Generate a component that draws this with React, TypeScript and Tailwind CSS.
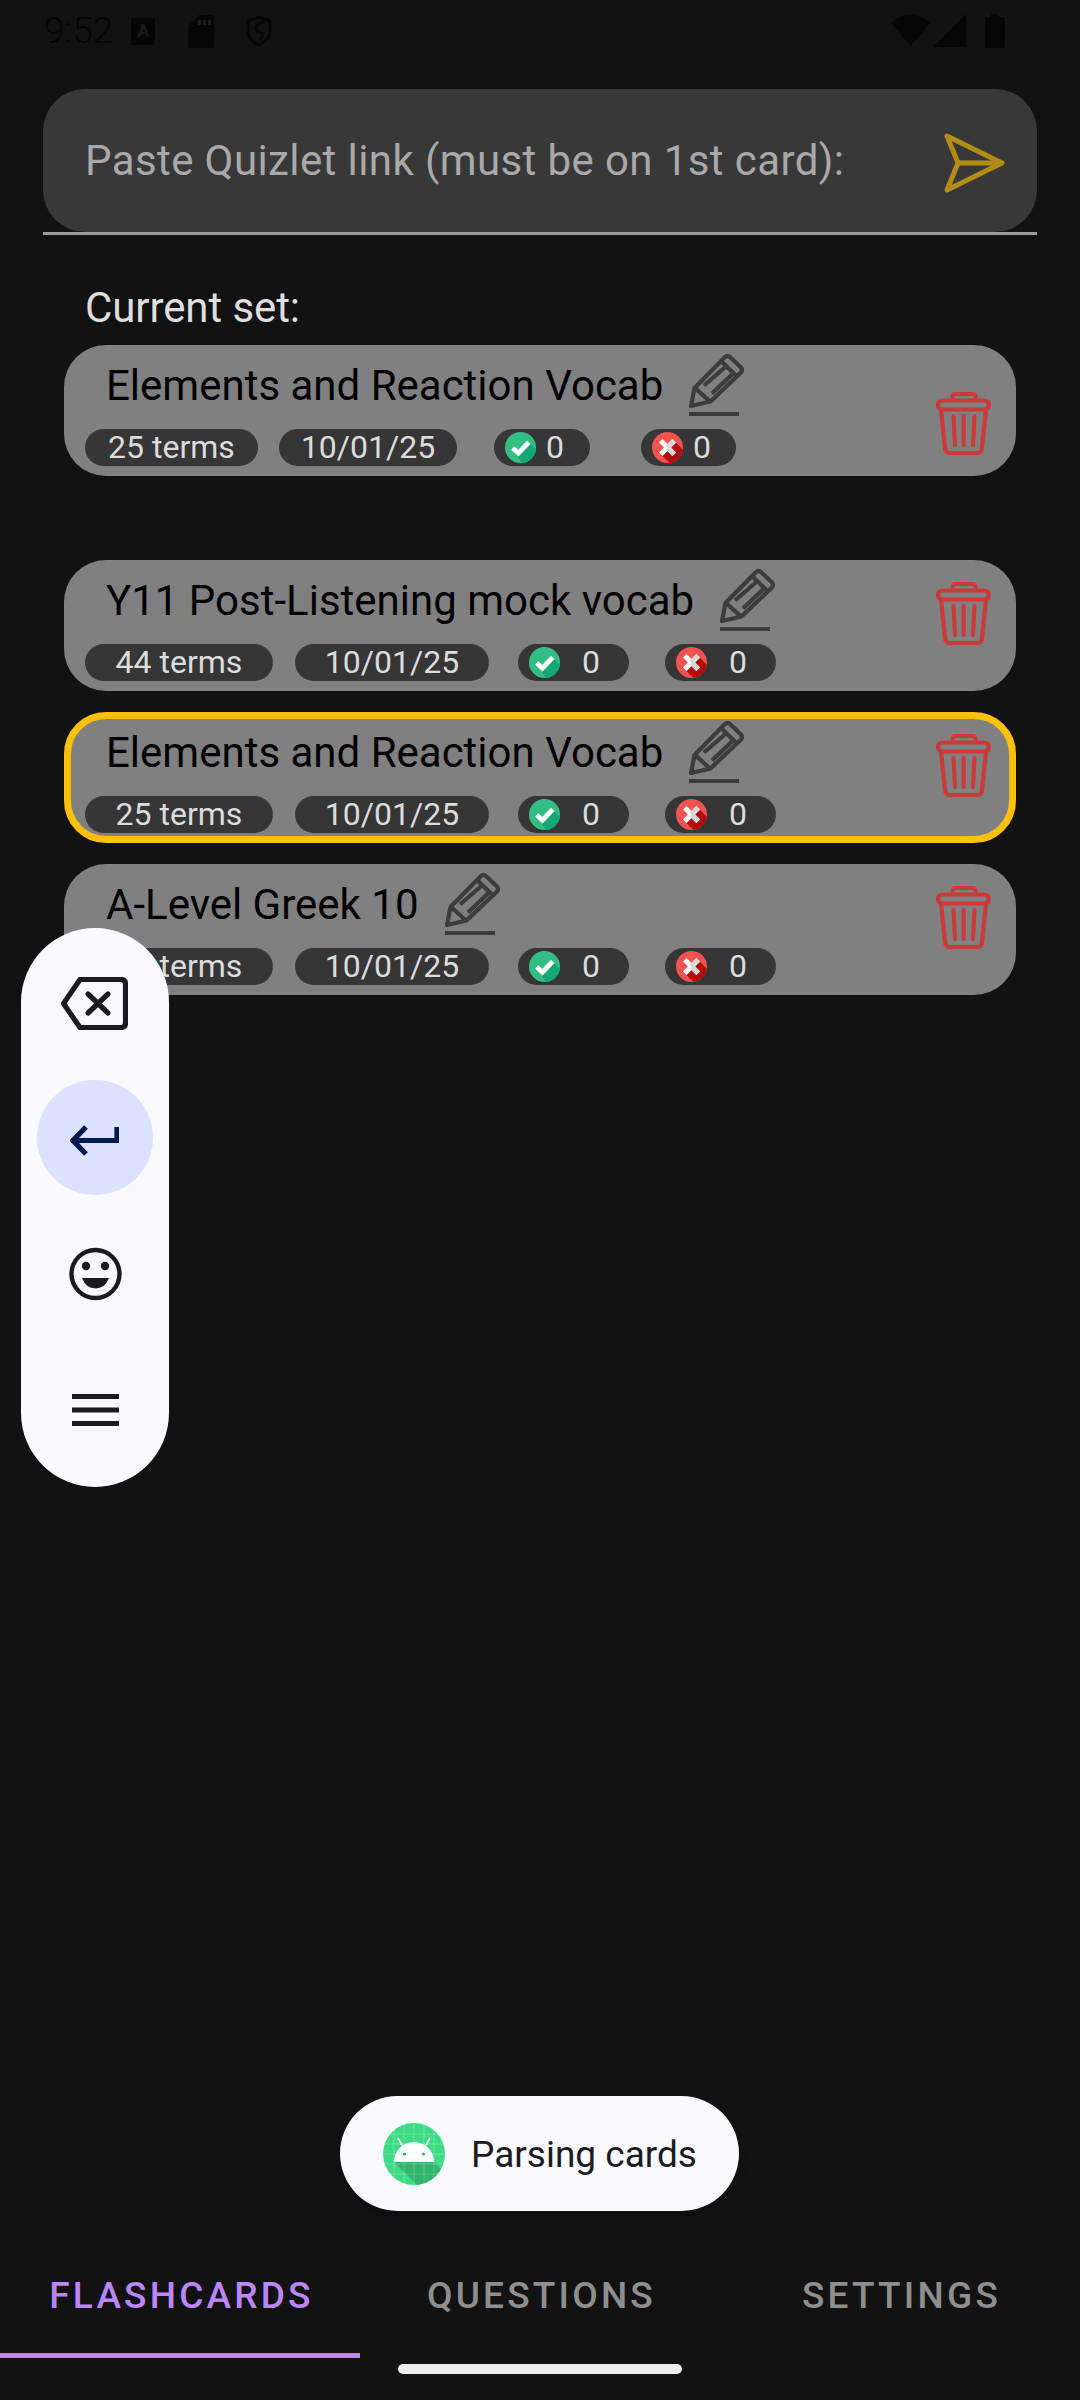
const shots = {
  check: "M7 15.5 L13 21.5 L23 9.5 L30 17 A15 15 0 0 1 16 30 Z",
  cross: "M8 21 L21 8 L30 17.5 A15 15 0 0 1 17 30 Z",
};

function CheckBadge() {
  return (
    <svg width="31" height="31" viewBox="0 0 30 30" className="shrink-0">
      <circle cx="15" cy="15" r="15" fill="#35BE84" />
      <path d={shots.check} fill="#10A873" />
      <path d="M7.5 15.5 L13 20.5 L23 10" fill="none" stroke="#fff" strokeWidth="4.6" />
    </svg>
  );
}

function CrossBadge() {
  return (
    <svg width="31" height="31" viewBox="0 0 30 30" className="shrink-0">
      <circle cx="15" cy="15" r="15" fill="#F5534F" />
      <path d={shots.cross} fill="#B00D0F" />
      <path d="M8.5 8.5 L21.5 21.5 M21.5 8.5 L8.5 21.5" fill="none" stroke="#fff" strokeWidth="5" />
      <path d="M15 15 L21.5 21.5 M15 15 L21.5 8.5" fill="none" stroke="#d8d8d8" strokeWidth="5" />
    </svg>
  );
}

function Pencil() {
  return (
    <svg width="55" height="63" viewBox="0 0 55 63" fill="none" stroke="#3c3c3c" strokeWidth="4.2" strokeLinejoin="round" className="shrink-0">
      <path d="M2 53 L5.5 35 L36 4 Q38.5 1.8 41 4 L52 14.5 Q54 17 52 19.5 L21.5 48.5 Z" />
      <path d="M32 8 L48 23.5 M6 35 L21 48.5 M15 32.5 L37.5 13 M23 40.5 L44.5 20" />
      <rect x="0" y="59" width="50" height="4" fill="#3c3c3c" stroke="none" />
    </svg>
  );
}

function Trash() {
  return (
    <svg width="55" height="63" viewBox="0 0 55 63" fill="none" stroke="#CB3A3A" strokeWidth="4.2" strokeLinecap="round" strokeLinejoin="round">
      <path d="M16.5 8 V5 Q16.5 2 19.5 2 H36.5 Q39.5 2 39.5 5 V8" />
      <rect x="2" y="8.5" width="51" height="9" rx="4.5" />
      <path d="M5 17.5 L9 56 Q9.5 61 14 61 H41 Q45.5 61 46 56 L50 17.5" />
      <path d="M17.5 24 L19 53 M27.7 24 V53 M38.5 24 L37 53" />
    </svg>
  );
}

function Send() {
  return (
    <svg width="61" height="60" viewBox="0 0 61 60" fill="none" stroke="#B38B17" strokeWidth="5" strokeLinejoin="round">
      <path d="M3 3 L58 30 L3 57 L14 30 Z" />
      <path d="M14 30 H58" />
    </svg>
  );
}

function AndroidIcon() {
  return (
    <svg width="62" height="62" viewBox="0 0 62 62" className="shrink-0">
      <defs>
        <clipPath id="android-disc">
          <circle cx="31" cy="31" r="31" />
        </clipPath>
      </defs>
      <g clipPath="url(#android-disc)">
        <rect width="62" height="62" fill="#3DDC84" />
        <path d="M11 39 H51 L62 50 V62 H34 Z" fill="#2FB56C" />
        <path d="M0 11 H62 M0 21 H62 M0 31 H62 M0 41 H62 M0 51 H62 M11 0 V62 M21 0 V62 M31 0 V62 M41 0 V62 M51 0 V62" stroke="#fff" strokeOpacity="0.28" strokeWidth="0.8" />
      </g>
      <path d="M11 39 A20 20 0 0 1 51 39 Z" fill="#fff" />
      <path d="M19 22 L15 15 M43 22 L47 15" stroke="#fff" strokeWidth="1.6" />
      <circle cx="21.5" cy="31" r="1.6" fill="#2FB56C" />
      <circle cx="40.5" cy="31" r="1.6" fill="#2FB56C" />
    </svg>
  );
}

function StatusBar() {
  return (
    <div className="h-[89px] flex items-start justify-between pl-[44px] pr-[75px] pt-[14px] text-[#060606]">
      <div className="flex items-center gap-[18px]">
        <span className="text-[37px] leading-[34px] font-light">9:52</span>
        <div className="w-[24px] h-[27px] bg-[#060606] rounded-[2px] flex items-center justify-center text-[#1a1a1a] text-[18px] font-bold leading-none">A</div>
        <svg width="26" height="33" viewBox="0 0 26 33" className="ml-[15px]">
          <path d="M11 0 H23 Q26 0 26 3 V30 Q26 33 23 33 H3 Q0 33 0 30 V11 Z" fill="#060606" />
          <path d="M10 5 H13 V10 H10 Z M15 5 H18 V10 H15 Z M20 5 H23 V10 H20 Z" fill="#1c1c1c" />
        </svg>
        <svg width="26" height="32" viewBox="0 0 26 32" fill="none" stroke="#060606" strokeWidth="3" className="ml-[14px]">
          <path d="M13 2 L24 6 V15 Q24 25 13 30 Q2 25 2 15 V6 Z" />
          <path d="M18 7 Q9 9 10 14 Q11 18 15 18 Q18 21 13 25" />
        </svg>
      </div>
      <div className="flex items-start">
        <svg width="39" height="32" viewBox="0 0 39 32">
          <path d="M0 9 Q19.5 -7 39 9 L19.5 32 Z" fill="#060606" />
        </svg>
        <svg width="33" height="33" viewBox="0 0 33 33" className="ml-[3px]">
          <path d="M33 0 V33 H0 Z" fill="#060606" />
        </svg>
        <svg width="20" height="34" viewBox="0 0 20 34" className="ml-[19px]">
          <path d="M6 3 V1 Q6 0 7 0 H13 Q14 0 14 1 V3 H18 Q20 3 20 5 V32 Q20 34 18 34 H2 Q0 34 0 32 V5 Q0 3 2 3 Z" fill="#060606" />
        </svg>
      </div>
    </div>
  );
}

function Chip({ width, children, center = true }: { width: number; children: React.ReactNode; center?: boolean }) {
  return (
    <div
      className={`h-[37px] rounded-full bg-[#363636] flex items-center text-[#dcdcdc] text-[32px] leading-none shrink-0 ${center ? "justify-center pb-[2px]" : "pl-[11px]"}`}
      style={{ width }}
    >
      {children}
    </div>
  );
}

type CardProps = {
  title: string;
  terms: string;
  compact?: boolean;
  active?: boolean;
  trashTop?: number;
};

function SetCard({ title, terms, compact = false, active = false, trashTop = 15 }: CardProps) {
  // the "current set" card has tighter chips than the ones in the list
  const widths = compact ? [173, 178, 96, 95] : [188, 194, 111, 111];
  const gaps = compact ? [21, 37, 51] : [22, 29, 36];
  const zeroGap = compact ? 10 : 22;

  return (
    <div className={`h-[131px] rounded-[42px] bg-[#808080] border-[7px] flex justify-between pl-[14px] pr-[18px] ${active ? "border-[#FFC107]" : "border-transparent"}`}>
      <div className="flex flex-col">
        <div className="h-[77px] flex items-start pl-[21px]">
          <span className="text-[42px] leading-[49px] text-black mt-[9px] whitespace-nowrap">{title}</span>
          <div className="ml-[26px] mt-px">
            <Pencil />
          </div>
        </div>
        <div className="flex">
          <Chip width={widths[0]}>{terms}</Chip>
          <div style={{ marginLeft: gaps[0] }}>
            <Chip width={widths[1]}>10/01/25</Chip>
          </div>
          <div style={{ marginLeft: gaps[1] }}>
            <Chip width={widths[2]} center={false}>
              <CheckBadge />
              <span className="pb-[2px]" style={{ marginLeft: zeroGap }}>0</span>
            </Chip>
          </div>
          <div style={{ marginLeft: gaps[2] }}>
            <Chip width={widths[3]} center={false}>
              <CrossBadge />
              <span className="pb-[2px]" style={{ marginLeft: zeroGap }}>0</span>
            </Chip>
          </div>
        </div>
      </div>
      <div style={{ marginTop: trashTop }}>
        <Trash />
      </div>
    </div>
  );
}

function KeyboardPill() {
  return (
    <div className="absolute left-[21px] top-[928px] w-[148px] h-[559px] rounded-full bg-[#F9F9FF] flex flex-col items-center">
      <svg width="67" height="53" viewBox="0 0 67 53" fill="none" stroke="#1B1B1F" strokeWidth="5.2" strokeLinejoin="round" strokeLinecap="round" className="mt-[49px] -ml-[2px]">
        <path d="M19 2.5 H60 Q64.5 2.5 64.5 7 V46 Q64.5 50.5 60 50.5 H19 L2.5 26.5 Z" />
        <path d="M27 17 L47 36 M47 17 L27 36" />
      </svg>
      <div className="mt-[50px] w-[116px] h-[115px] rounded-full bg-[#DAE2FF] flex items-center justify-center">
        <svg width="49" height="31" viewBox="0 0 49 31" fill="none" stroke="#001A4F" strokeWidth="5.2" strokeLinejoin="miter" className="mt-[5px] -ml-[2px]">
          <path d="M16 2 L3 15.5 L16 29" />
          <path d="M3 15.5 H47 V2" />
        </svg>
      </div>
      <svg width="53" height="54" viewBox="0 0 53 54" className="mt-[52px]">
        <circle cx="26.5" cy="27" r="24" fill="none" stroke="#1B1B1F" strokeWidth="4.4" />
        <circle cx="17" cy="19" r="4.2" fill="#1B1B1F" />
        <circle cx="36" cy="19" r="4.2" fill="#1B1B1F" />
        <path d="M13 31 H40 Q36 41.5 26.5 41.5 Q17 41.5 13 31 Z" fill="#1B1B1F" />
      </svg>
      <svg width="47" height="32" viewBox="0 0 47 32" className="mt-[93px]">
        <path d="M0 0 H47 V5 H0 Z M0 13.5 H47 V18.5 H0 Z M0 27 H47 V32 H0 Z" fill="#1B1B1F" />
      </svg>
    </div>
  );
}

export default function App() {
  return (
    <div className="relative w-[1080px] h-[2400px] bg-[#121212] flex flex-col overflow-hidden font-['Roboto',sans-serif]">
      <StatusBar />

      <div className="mx-[43px] h-[146px] border-b-[3px] border-[#9a9a9a]">
        <div className="h-full rounded-[42px] bg-[#383838] flex items-start justify-between pl-[42px] pr-[32px]">
          <span className="text-[42px] leading-[49px] tracking-[0.4px] text-[#a9a9a9] mt-[47px]">Paste Quizlet link (must be on 1st card):</span>
          <div className="mt-[44px]">
            <Send />
          </div>
        </div>
      </div>

      <p className="mt-[48px] ml-[85px] text-[42px] leading-[49px] tracking-[-0.1px] text-[#dedede]">Current set:</p>

      <div className="mt-[13px] mx-[64px]">
        <SetCard title="Elements and Reaction Vocab" terms="25 terms" compact trashTop={40} />
      </div>

      <div className="mt-[84px] mx-[64px] flex flex-col gap-[21px]">
        <SetCard title="Y11 Post-Listening mock vocab" terms="44 terms" />
        <SetCard title="Elements and Reaction Vocab" terms="25 terms" active />
        <SetCard title="A-Level Greek 10" terms="25 terms" />
      </div>

      <div className="flex-1" />

      <div className="grid grid-cols-3 h-[108px] text-[37px] leading-[43px] font-medium tracking-[3.2px] text-center">
        <div className="flex flex-col text-[#BB86FC]">
          <span className="mt-[24px] flex-1 pl-[3px]">FLASHCARDS</span>
          <div className="h-[5px] bg-[#BB86FC]" />
        </div>
        <span className="mt-[24px] pl-[3px] text-[#8f8f8f]">QUESTIONS</span>
        <span className="mt-[24px] pl-[3px] text-[#8f8f8f]">SETTINGS</span>
      </div>
      <div className="h-[42px] pt-[6px] flex justify-center">
        <div className="w-[284px] h-[10px] rounded-[5px] bg-[#EEEEEE]" />
      </div>

      <KeyboardPill />

      <div className="absolute left-[340px] top-[2096px] w-[399px] h-[115px] rounded-full bg-[#F9F9FF] shadow-lg flex items-center pl-[43px]">
        <AndroidIcon />
        <span className="ml-[26px] mt-[2px] text-[37px] leading-[43px] text-[#1B1B1F]">Parsing cards</span>
      </div>
    </div>
  );
}
